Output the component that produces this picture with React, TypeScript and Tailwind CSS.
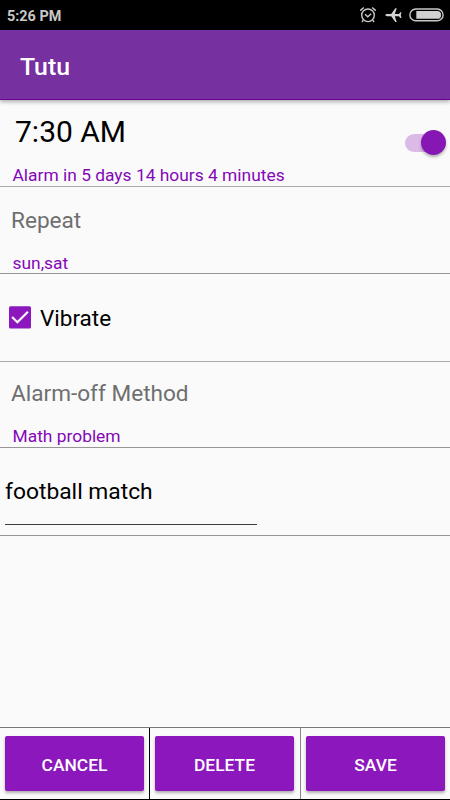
import React from 'react';

const AlarmIcon = () => (
  <svg className="h-[18px] w-[18px]" viewBox="0 0 18 18" fill="none" stroke="#c8c8c8" strokeWidth="1.4">
    <circle cx="9" cy="9.3" r="6.3" />
    <path d="M1.2 4.6 4.8 1.5M16.8 4.6 13.2 1.5M6 8.2l2.8 2.6 3.4-3M4.3 14.2 3 16M13.7 14.2 15 16" />
  </svg>
);

const PlaneIcon = () => (
  <svg className="h-4 w-[17px]" viewBox="0 0 17 16" fill="#d4d4d4">
    <path d="M0.3 8.1C0.3 7.3 1.2 6.9 2.2 6.9H6.2L10.3 1.2H11.7L9.8 6.9H14L15.3 5.2H16.4L15.8 8.1 16.4 11H15.3L14 9.3H9.8L11.7 15H10.3L6.2 9.3H2.2C1.2 9.3 0.3 8.9 0.3 8.1Z" />
  </svg>
);

const BatteryIcon = () => (
  <svg className="h-[14px] w-[35px]" viewBox="0 0 35 14" fill="none">
    <rect x="0.9" y="1" width="33.2" height="11.8" rx="5.9" stroke="#c8c8c8" strokeWidth="1.4" />
    <path d="M7.3 3H28.2a3.9 3.9 0 0 1 0 7.8H7.3Z" fill="#d0d0d0" />
  </svg>
);

const StatusBar = () => (
  <div className="flex h-[30px] items-center justify-between bg-black pl-[7px] pr-[6px]">
    <span className="pt-[4px] text-[14.4px] font-bold leading-none text-[#c8c8c8]">5:26 PM</span>
    <div className="flex items-center">
      <AlarmIcon />
      <div className="ml-2 mr-[7px]">
        <PlaneIcon />
      </div>
      <BatteryIcon />
    </div>
  </div>
);

type SettingProps = {
  label: string;
  value: string;
  className: string;
};

const Setting = ({ label, value, className }: SettingProps) => (
  <section className={`flex flex-col border-b border-[#969696] ${className}`}>
    <h2 className="pl-[11px] text-[22.6px] leading-[32px] text-[#6f6f6f]">{label}</h2>
    <p className="mt-[15px] pl-[12.5px] text-[17.4px] leading-[22px] text-[#8407b8]">{value}</p>
  </section>
);

const buttonClass =
  'h-[55px] w-full rounded-[2px] bg-[#8c18bd] pt-[4px] text-[17.4px] font-medium leading-none text-white shadow-[0_2px_3px_rgba(0,0,0,0.3)]';

const App = () => {
  return (
    <main className="flex h-[800px] w-[450px] flex-col overflow-hidden bg-[#fafafa] font-['Roboto',sans-serif] text-black">
      <StatusBar />

      {/* App bar */}
      <header className="flex h-[70px] shrink-0 items-center border-b border-[#6a0091] bg-[#77309f] pl-[20px] pt-[4px] shadow-[0_2px_4px_rgba(0,0,0,0.3)]">
        <h1 className="text-[24.8px] font-medium leading-[30px] text-white">Tutu</h1>
      </header>

      {/* Alarm time */}
      <section className="flex h-[87px] shrink-0 justify-between border-b border-[#aaaaaa]">
        <div className="pt-[14px]">
          <div className="pl-[15px] text-[30px] leading-[36px]">7:30 AM</div>
          <p className="mt-[14px] pl-[12.5px] text-[17.4px] leading-[22px] text-[#8407b8]">
            Alarm in 5 days 14 hours 4 minutes
          </p>
        </div>
        <div className="mr-[4px] mt-[30px] flex h-[25px] w-[41px] items-center">
          <div className="h-[18px] w-[30px] rounded-l-full bg-[#dcbae8]" />
          <div className="-ml-[14px] h-[25px] w-[25px] shrink-0 rounded-full bg-[#8717b5] shadow-[0_2px_3px_rgba(0,0,0,0.3)]" />
        </div>
      </section>

      <Setting label="Repeat" value="sun,sat" className="h-[87px] shrink-0 pt-[18px]" />

      {/* Vibrate */}
      <section className="flex h-[88px] shrink-0 items-center border-b border-[#aaaaaa] pl-[9px]">
        <svg className="h-[23px] w-[22px]" viewBox="0 0 22 23" fill="none">
          <rect y="0.3" width="22" height="22.2" rx="1.5" fill="#8c18bd" />
          <path d="M3.1 11 8.4 16.3 18.9 5.8" stroke="#fafafa" strokeWidth="2.2" />
        </svg>
        <span className="ml-[9px] text-[22.5px] leading-[30px]">Vibrate</span>
      </section>

      <Setting label="Alarm-off Method" value="Math problem" className="h-[86px] shrink-0 pt-[16px]" />

      {/* Alarm name */}
      <section className="h-[88px] shrink-0 border-b border-[#969696] pl-[5px] pt-[28px]">
        <div className="h-[49px] w-[252px] border-b border-[#3c3c3c] text-[22.8px] leading-[32px]">
          football match
        </div>
      </section>

      <div className="flex-1" />

      {/* Actions */}
      <footer className="flex h-[73px] shrink-0 border-b border-t border-b-black border-t-[#777777]">
        <div className="w-[150px] border-r border-black pl-[5px] pr-[5px] pt-[8px]">
          <button className={buttonClass}>CANCEL</button>
        </div>
        <div className="w-[151px] border-r border-[#888888] pl-[5px] pr-[6px] pt-[8px]">
          <button className={buttonClass}>DELETE</button>
        </div>
        <div className="flex-1 pl-[5px] pr-[5px] pt-[8px]">
          <button className={buttonClass}>SAVE</button>
        </div>
      </footer>
    </main>
  );
};

export default App;
